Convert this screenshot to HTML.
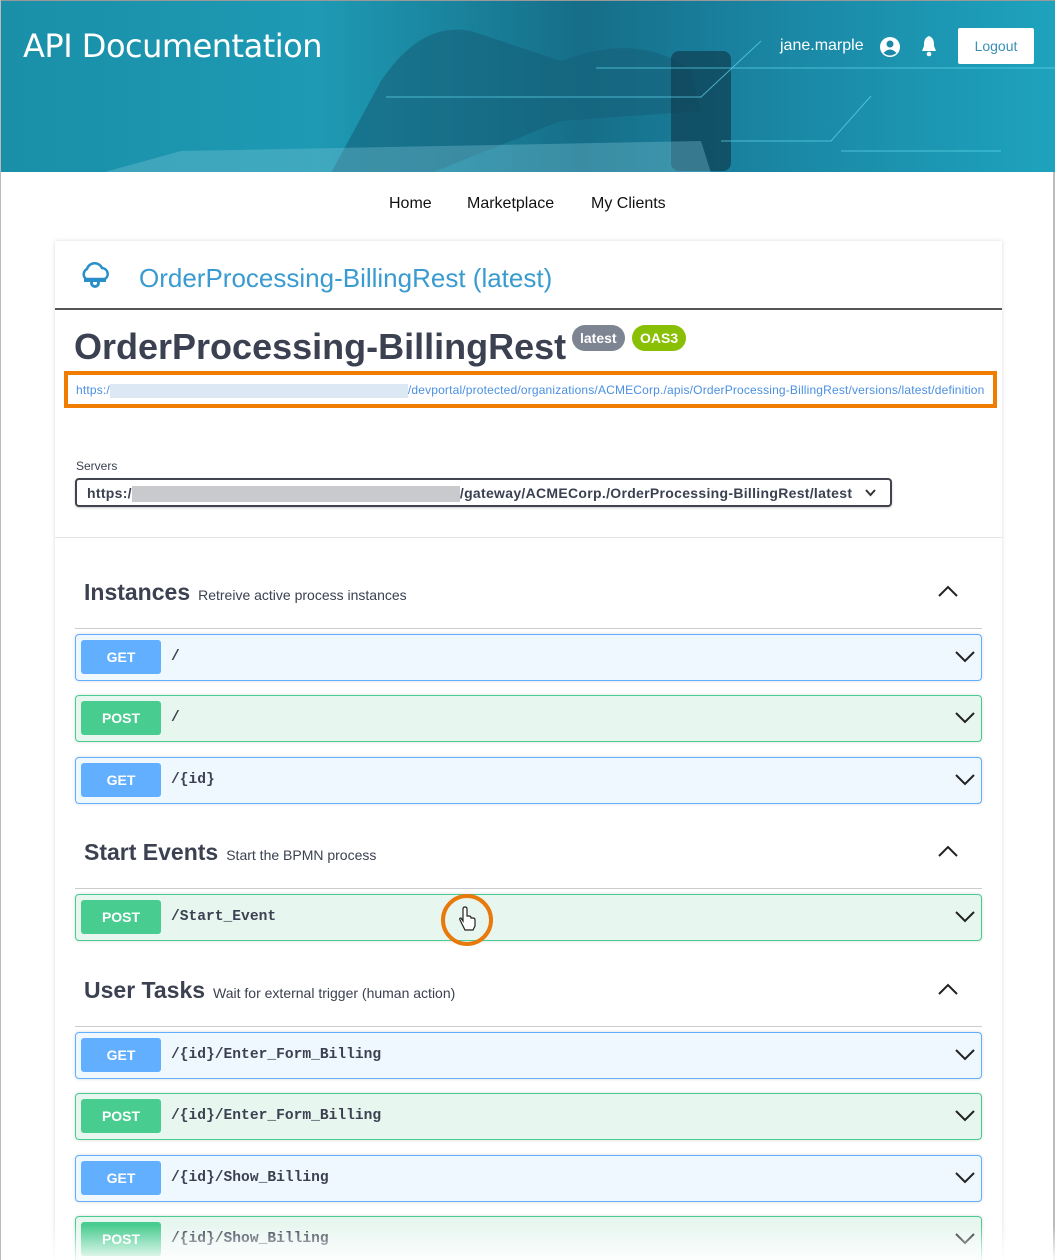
<!DOCTYPE html>
<html style="width:1055px;height:1260px;overflow:hidden"><head><meta charset="utf-8"><style>
*{box-sizing:border-box;margin:0;padding:0}
body{width:1055px;height:1260px;overflow:hidden;background:#fff;font-family:"Liberation Sans",sans-serif;position:relative;border-left:1px solid #bbb;border-right:2px solid #bbb}
.hdr{position:absolute;left:0;top:0;width:1055px;height:172px;background:linear-gradient(90deg,#1a8fa8 0%,#1e9ab4 30%,#166e88 55%,#1a88a6 75%,#1ea3bd 100%);overflow:hidden;border-top:1px solid #999}
.hdr .t{position:absolute;left:22px;top:26px;color:#fff;font-size:32px;font-family:"DejaVu Sans",sans-serif;font-weight:400;letter-spacing:-0.5px}
.hdr .u{position:absolute;left:779px;top:36px;color:#fff;font-size:16px}
.lo{position:absolute;left:957px;top:27px;width:76px;height:36px;background:#fff;color:#3a8fb7;font-size:14px;text-align:center;line-height:36px;border-radius:2px}
.nav{position:absolute;top:195px;font-size:16px;color:#111}
.card{position:absolute;left:54px;top:241px;width:947px;height:1019px;box-shadow:0 0 4px rgba(0,0,0,.15);background:#fff}
.ct{position:absolute;left:138px;top:263px;font-size:26px;color:#3a9bd0}
.hl{position:absolute;left:54px;top:308px;width:947px;height:2px;background:#555}
.h1{position:absolute;left:73px;top:326px;font-size:36px;font-weight:bold;color:#3b4151}
.tag{position:absolute;top:325px;height:26px;border-radius:13px;color:#fff;font-size:14px;font-weight:bold;line-height:26px;padding:0 8px}
.ub{position:absolute;left:63px;top:371px;width:933px;height:37px;border:4px solid #f07c00;font-size:12px;color:#4a90e2;padding:8px 0 0 8px;white-space:nowrap;letter-spacing:.17px}
.blur{display:inline-block;width:298px;height:14px;background:#dde8f5;vertical-align:middle}
.sv{position:absolute;left:75px;top:459px;font-size:12px;color:#3b4151}
.sel{position:absolute;left:74px;top:478px;width:817px;height:29px;border:2px solid #41444e;border-radius:4px;font-size:14px;font-weight:bold;color:#3b4151;padding:5px 10px;box-shadow:0 1px 2px rgba(0,0,0,.2);letter-spacing:.3px;white-space:nowrap}
.sb{display:inline-block;width:328px;height:16px;background:#c8cacd;vertical-align:middle}
.sep{position:absolute;left:54px;top:537px;width:947px;height:1px;background:#e5e5e5}
.sec{position:absolute;left:83px;font-size:23px;font-weight:bold;color:#3b4151}
.sec span{font-size:14px;font-weight:normal;margin-left:8px}
.line{position:absolute;left:74px;width:907px;height:1px;background:#ccc}
.row{position:absolute;left:74px;width:907px;height:47px;border:1px solid;border-radius:4px;box-shadow:0 0 3px rgba(0,0,0,.15)}
.g{background:#eff7ff;border-color:#61affe}.p{background:#e8f6f0;border-color:#49cc90}
.row b{position:absolute;left:5px;top:5px;width:80px;height:34px;border-radius:3px;color:#fff;font-size:14px;line-height:34px;text-align:center}
.g b{background:#61affe}.p b{background:#49cc90}
.row i{position:absolute;left:95px;top:14px;font-style:normal;font-family:"Liberation Mono",monospace;font-weight:bold;font-size:14.6px;color:#3b4151}
.row svg,.up{position:absolute}
.row svg{right:6px;top:15px}
.fade{position:absolute;left:0;top:1225px;width:1055px;height:35px;background:linear-gradient(rgba(255,255,255,0),rgba(255,255,255,.9))}
</style></head><body>
<div class="hdr">
<svg width="1055" height="172" style="position:absolute;left:0;top:0">
<path d="M330 172 L380 80 Q420 20 470 30 L560 60 Q640 30 690 70 L700 110 L560 120 L430 172Z" fill="#15607a" opacity=".6"/>
<rect x="670" y="50" width="60" height="120" rx="8" fill="#0e3e52" opacity=".7"/>
<path d="M100 172 L180 150 L700 140 L710 172Z" fill="#7ec6d6" opacity=".35"/>
<g stroke="#5fd8ee" stroke-width="1" fill="none" opacity=".7"><path d="M595 67 H1055"/><path d="M385 96 H700 L760 40"/><path d="M720 140 H830 L870 95"/><path d="M840 150 H1000"/></g>
</svg>
<div class="t">API Documentation</div>
<div class="u">jane.marple</div>
<svg style="position:absolute;left:878px;top:35px" width="22" height="22" viewBox="0 0 22 22"><circle cx="11" cy="11" r="10" fill="#fff"/><circle cx="11" cy="8" r="3.5" fill="#1a88a6"/><path d="M4.5 17 Q11 10 17.5 17 Q11 22 4.5 17Z" fill="#1a88a6"/></svg>
<svg style="position:absolute;left:919px;top:34px" width="18" height="22" viewBox="0 0 18 22"><path d="M9 1 C4 3 4 7 4 11 L2 16 H16 L14 11 C14 7 14 3 9 1Z" fill="#fff"/><circle cx="9" cy="19" r="2.3" fill="#fff"/></svg>
<div class="lo">Logout</div>
</div>
<div class="nav" style="left:388px">Home</div>
<div class="nav" style="left:466px">Marketplace</div>
<div class="nav" style="left:590px">My Clients</div>
<div class="card"></div>
<svg style="position:absolute;left:77px;top:262px" width="34" height="30" viewBox="0 0 34 30"><path d="M8 17 A6 6 0 0 1 9 7 A8 8 0 0 1 24 6 A6 6 0 0 1 27 17Z" fill="none" stroke="#2a8fc9" stroke-width="2.5"/><circle cx="17" cy="21" r="5" fill="#2a8fc9"/><circle cx="17" cy="21" r="2" fill="#fff"/><rect x="6" y="17" width="22" height="3" fill="#2a8fc9"/></svg>
<div class="ct">OrderProcessing-BillingRest (latest)</div>
<div class="hl"></div>
<div class="h1">OrderProcessing-BillingRest</div>
<div class="tag" style="left:571px;background:#7d8492">latest</div>
<div class="tag" style="left:631px;background:#89bf04">OAS3</div>
<div class="ub">https:/<span class="blur"></span>/devportal/protected/organizations/ACMECorp./apis/OrderProcessing-BillingRest/versions/latest/definition</div>
<div class="sv">Servers</div>
<div class="sel">https:/<span class="sb"></span>/gateway/ACMECorp./OrderProcessing-BillingRest/latest
<svg style="position:absolute;right:14px;top:9px" width="11" height="8" viewBox="0 0 11 8"><path d="M1 1 L5.5 6 L10 1" stroke="#333" stroke-width="2" fill="none"/></svg></div>
<div class="sep"></div>

<div class="sec" style="top:579px">Instances<span>Retreive active process instances</span></div>
<div class="sec" style="top:839px">Start Events<span>Start the BPMN process</span></div>
<div class="sec" style="top:977px">User Tasks<span>Wait for external trigger (human action)</span></div>
<svg class="up" style="left:937px;top:585px" width="20" height="12"><path d="M1 11 L10 2 L19 11" stroke="#222" stroke-width="2" fill="none"/></svg>
<svg class="up" style="left:937px;top:845px" width="20" height="12"><path d="M1 11 L10 2 L19 11" stroke="#222" stroke-width="2" fill="none"/></svg>
<svg class="up" style="left:937px;top:983px" width="20" height="12"><path d="M1 11 L10 2 L19 11" stroke="#222" stroke-width="2" fill="none"/></svg>
<div class="line" style="top:628px"></div>
<div class="line" style="top:888px"></div>
<div class="line" style="top:1026px"></div>

<div class="row g" style="top:634px"><b>GET</b><i>/</i><svg width="20" height="14"><path d="M1 2 L10 11 L19 2" stroke="#222" stroke-width="2" fill="none"/></svg></div>
<div class="row p" style="top:695px"><b>POST</b><i>/</i><svg width="20" height="14"><path d="M1 2 L10 11 L19 2" stroke="#222" stroke-width="2" fill="none"/></svg></div>
<div class="row g" style="top:757px"><b>GET</b><i>/{id}</i><svg width="20" height="14"><path d="M1 2 L10 11 L19 2" stroke="#222" stroke-width="2" fill="none"/></svg></div>
<div class="row p" style="top:894px"><b>POST</b><i>/Start_Event</i><svg width="20" height="14"><path d="M1 2 L10 11 L19 2" stroke="#222" stroke-width="2" fill="none"/></svg></div>
<div class="row g" style="top:1032px"><b>GET</b><i>/{id}/Enter_Form_Billing</i><svg width="20" height="14"><path d="M1 2 L10 11 L19 2" stroke="#222" stroke-width="2" fill="none"/></svg></div>
<div class="row p" style="top:1093px"><b>POST</b><i>/{id}/Enter_Form_Billing</i><svg width="20" height="14"><path d="M1 2 L10 11 L19 2" stroke="#222" stroke-width="2" fill="none"/></svg></div>
<div class="row g" style="top:1155px"><b>GET</b><i>/{id}/Show_Billing</i><svg width="20" height="14"><path d="M1 2 L10 11 L19 2" stroke="#222" stroke-width="2" fill="none"/></svg></div>
<div class="row p" style="top:1216px"><b>POST</b><i>/{id}/Show_Billing</i><svg width="20" height="14"><path d="M1 2 L10 11 L19 2" stroke="#222" stroke-width="2" fill="none"/></svg></div>

<svg style="position:absolute;left:438px;top:892px" width="56" height="56" viewBox="0 0 56 56"><circle cx="28" cy="28" r="24" fill="none" stroke="#e87a0c" stroke-width="4"/><path d="M24 34 L21 28 Q20 26 22 26 L24 29 V17 Q24 15 26 15 Q28 15 28 17 V24 H30 Q32 24 32 26 H34 Q36 26 36 28 V34 L34 38 H26Z" fill="#fff" stroke="#222" stroke-width="1.2"/></svg>
<div class="fade"></div>
</body></html>
